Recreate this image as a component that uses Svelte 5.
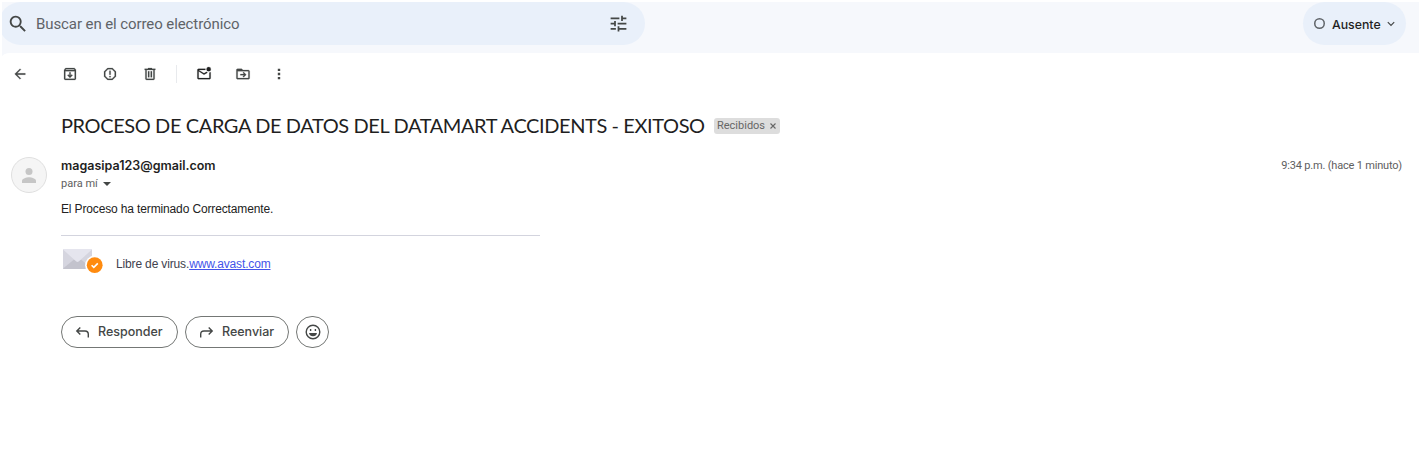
<script>
  const tools = [
    { label: 'Volver', d: 'M20 11H7.800l5.600-5.600L12 4l-8 8 8 8 1.400-1.400L7.800 13H20z' },
    { label: 'Archivar', d: 'M5 21q-.8 0-1.400-.6T3 19V6.500q0-.5.3-.9l1.200-1.700Q5 3 5.800 3h12.400q.8 0 1.300.7l1.200 1.700q.3.4.3 1V19q0 .8-.6 1.400T19 21zM5.400 6h13.200l-.8-1H6.200zM5 8v11h14V8zm7 10 4-4-1.400-1.400-1.600 1.600V9.500h-2v4.700l-1.600-1.600L8 14z' },
    { label: 'Spam', d: 'M8.300 21 3 15.700V8.300L8.300 3h7.400L21 8.300v7.400L15.700 21zm.8-2h5.800l4.100-4.100V9.100L14.900 5H9.100L5 9.100v5.800zM11 7h2v6h-2zm0 8h2v2h-2z' },
    { label: 'Eliminar', d: 'M7 21q-.8 0-1.400-.6T5 19V6H4V4h5V3h6v1h5v2h-1v13q0 .8-.6 1.400T17 21zM7 6v13h10V6zm2 2h2v9H9zm4 0h2v9h-2z' }
  ];
  const more = [
    { label: 'No leído', d: 'M4 20q-.8 0-1.400-.6T2 18V6q0-.8.600-1.400T4 4h10.100a5 5 0 0 0 0 2H4l8 5 3.700-2.300 1.600 1.300L12 13 4 8v10h16V9.900q1.100-.2 2-.9v9q0 .8-.6 1.400T20 20zM19 8a3.300 3.300 0 1 1 0-6.600A3.300 3.300 0 0 1 19 8z' },
    { label: 'Mover a', d: 'M4 20q-.8 0-1.400-.6T2 18V6q0-.8.600-1.400T4 4h6l2 2h8q.8 0 1.400.600T22 8v10q0 .8-.6 1.400T20 20zM4 8v10h16V8zm9 9 4-4-4-4-1.300 1.300 1.700 1.700H8v2h5.400l-1.700 1.700z' },
    { label: 'Más', d: 'M10.200 4h3.600v3.600h-3.600zm0 6.200h3.600v3.600h-3.600zm0 6.200h3.600V20h-3.600z' }
  ];
</script>

<div class="page">
  <header>
    <div class="search">
      <svg class="lens" viewBox="0 0 24 24"><path d="M15.500 14h-.8l-.3-.3A6.500 6.500 0 1 0 13.700 14.400l.3.3v.8l5 5 1.500-1.500zm-6 0a4.500 4.500 0 1 1 0-9 4.500 4.500 0 0 1 0 9z"/></svg>
      <span>Buscar en el correo electrónico</span>
      <svg class="tune" viewBox="0 0 24 24"><path d="M3 17v2h6v-2zM3 5v2h10V5zm10 16v-2h8v-2h-8v-2h-2v6zM7 9v2H3v2h4v2h2V9zm14 4v-2H11v2zm-6-4h2V7h4V5h-4V3h-2z"/></svg>
    </div>
    <div class="status">
      <i></i><span>Ausente</span>
      <svg viewBox="0 0 10 10"><path d="M1.800 3.200 5 6.400l3.200-3.200" fill="none" stroke="#444746" stroke-width="1.200"/></svg>
    </div>
  </header>

  <nav>
    {#each tools as t, i}
      <svg class:back={i === 0} class="tool" viewBox="0 0 24 24" aria-label={t.label}><path d={t.d}/></svg>
    {/each}
    <b class="rule"></b>
    {#each more as t, i}
      <svg class="tool" class:dark={i === 0} class:last={i === 2} viewBox="0 0 24 24" aria-label={t.label}><path d={t.d}/></svg>
    {/each}
  </nav>

  <div class="subject">
    <h1>PROCESO DE CARGA DE DATOS DEL DATAMART ACCIDENTS - EXITOSO</h1>
    <div class="tag"><span>Recibidos</span>
      <svg viewBox="0 0 8 8"><path d="m1.500 1.500 5 5m0-5-5 5" stroke="#666" stroke-width="1.100"/></svg>
    </div>
  </div>

  <main>
    <svg class="avatar" viewBox="0 0 36 36"><circle cx="18" cy="18" r="17.500" fill="#f5f5f5" stroke="#dfdfdf"/><circle cx="18" cy="14.500" r="3.500" fill="#c6c6c6"/><path d="M11 26v-2.200c0-2.400 4.600-3.600 7-3.600s7 1.200 7 3.600V26z" fill="#c6c6c6"/></svg>
    <section>
      <div class="from"><strong>magasipa123@gmail.com</strong><time>9:34 p.m. (hace 1 minuto)</time></div>
      <div class="to"><span>para mí</span><i></i></div>
      <p>El Proceso ha terminado Correctamente.</p>
      <div class="footer">
        <svg viewBox="0 0 42 26"><rect x="1" y="1" width="29" height="20" rx="1" fill="#d5d5df"/><path d="M1 20.500 12 11.500h7l11 9-.5.5h-28z" fill="#c3c3cd"/><path d="M1 1.500 1.500 1h28l.5.500L16.700 13.500q-1.200.9-2.400 0z" fill="#e5e5ee"/><circle cx="32.700" cy="17.200" r="9.600" fill="#fff"/><circle cx="32.700" cy="17.200" r="7.900" fill="#ff8b0f"/><path d="m29.600 17.200 2.200 2.200 4-4" fill="none" stroke="#fff" stroke-width="1.600"/></svg>
        <span>Libre de virus.<u>www.avast.com</u></span>
      </div>
      <div class="actions">
        <button class="reply"><svg viewBox="0 0 16 16"><path d="M5.300 3.500 1.800 7l3.500 3.500M2 7h8q3.300 0 3.300 3.200v3.300"/></svg><span>Responder</span></button>
        <button class="forward"><svg viewBox="0 0 16 16"><path d="M9.700 3.500 13.200 7l-3.500 3.500M13 7H5q-3.300 0-3.300 3.200v3.300"/></svg><span>Reenviar</span></button>
        <button class="emoji" aria-label="Reaccionar"><svg viewBox="0 0 16 16"><circle cx="8" cy="8" r="6.800"/><path d="M4 9h8A4.100 4.100 0 0 1 4 9z" fill="#444746" stroke="none"/><path d="M5.600 5v2m4.800-2v2"/></svg></button>
      </div>
    </section>
  </main>
</div>

<style>
  :global(body) { margin: 0; background: #fff; }
  .page { display: flow-root; width: 1421px; height: 452px; overflow: hidden; font-family: Roboto, sans-serif; color: #202124; }
  svg { display: block; flex: none; fill: #444746; }
  span, time, strong, h1 { white-space: nowrap; }
  header { display: flex; justify-content: space-between; align-items: flex-start; height: 54px; margin: 2px 2px 0; background: #f6f8fc; overflow: hidden; }
  .search { display: flex; align-items: center; box-sizing: border-box; width: 646px; height: 43px; margin-left: -3px; padding: 0 16px 0 8px; background: #e9f0fa; border-radius: 22px; }
  .lens { width: 22px; height: 22px; margin-right: 7px; }
  .search span { flex: 1; font-size: 15px; letter-spacing: -0.090px; color: #5f6368; }
  .tune { width: 21px; height: 21px; }
  .status { display: flex; align-items: center; box-sizing: border-box; width: 103px; height: 43px; margin-right: 13px; padding-left: 11px; border-radius: 22px; background: #e9f0fa; }
  .status i { width: 11px; height: 11px; box-shadow: inset 0 0 0 1.500px #5f6368; border-radius: 50%; margin-right: 7px; }
  .status span { width: 48px; margin-top: 1px; font: 500 12.300px Inter, sans-serif; color: #1f1f1f; }
  .status svg { width: 10px; height: 10px; margin-left: 6px; }
  nav { position: relative; display: flex; align-items: center; height: 42px; margin: -3px 0 0 2px; padding: 0 0 0 10px; border-top-left-radius: 8px 4px; background: #fff; }
  .tool { width: 16px; height: 16px; margin-right: 24px; stroke: #444746; stroke-width: .3; }
  .back { margin-right: 34px; }
  .rule { width: 1px; height: 18px; margin: 0 19px 0 -6px; background: #e8eaed; }
  .rule + .tool { margin-right: 23px; }
  .tool.dark { fill: #1f1f1f; }
  .last { margin-left: -4px; stroke: none; }
  .subject { display: flex; align-items: center; height: 32px; margin-top: 15px; padding-left: 61px; }
  h1 { margin: -2px 0 0; width: 653px; font: 400 20px Lato, sans-serif; letter-spacing: -0.400px; color: #1f1f1f; }
  .tag { display: flex; align-items: center; box-sizing: border-box; width: 66px; height: 16px; padding-left: 3px; border-radius: 3px; background: #ddd; color: #666; font-size: 11px; }
  .tag span { width: 52px; margin-top: -1px; }
  .tag svg { width: 8px; height: 8px; }
  main { display: flex; align-items: flex-start; padding: 15px 19px 0 11px; }
  .avatar { width: 36px; height: 36px; margin-right: 14px; }
  section { flex: 1; }
  .from { display: flex; justify-content: space-between; align-items: center; height: 17px; }
  strong { font: 600 12.500px Inter, sans-serif; color: #1f1f1f; }
  time { font-size: 11px; letter-spacing: -0.190px; color: #5e5e5e; }
  .to { display: flex; align-items: center; height: 18px; font-size: 11px; color: #5e5e5e; }
  .to i { margin: 1px 0 0 5px; border: 4px solid transparent; border-top-color: #444746; border-bottom: 0; }
  p { margin: 9px 0 0; font: 12px/16px "Liberation Sans", sans-serif; letter-spacing: -0.140px; color: #222; }
  .footer { display: flex; align-items: flex-start; box-sizing: border-box; width: 479px; height: 81px; margin-top: 18px; padding-top: 12px; border-top: 1px solid #d3d4de; font: 12px/18px "Liberation Sans", sans-serif; letter-spacing: -0.150px; color: #41424e; }
  .footer svg { width: 42px; height: 26px; margin: 0 12px 0 1px; }
  .footer span { margin-top: 7px; }
  u { color: #4453ea; }
  .actions { display: flex; gap: 7px; }
  button { display: flex; align-items: center; box-sizing: border-box; height: 32px; padding: 0 0 0 13px; border: 1px solid #747775; border-radius: 16px; background: #fff; font: 500 12.500px Inter, sans-serif; color: #444746; }
  button span { margin-top: -2px; }
  button svg { width: 16px; height: 16px; margin-right: 7px; fill: none; stroke: #444746; stroke-width: 1.400; }
  .reply { width: 117px; }
  .forward { width: 104px; }
  .emoji { width: 33px; padding: 0; justify-content: center; }
  .emoji svg { margin: 0; }
</style>
